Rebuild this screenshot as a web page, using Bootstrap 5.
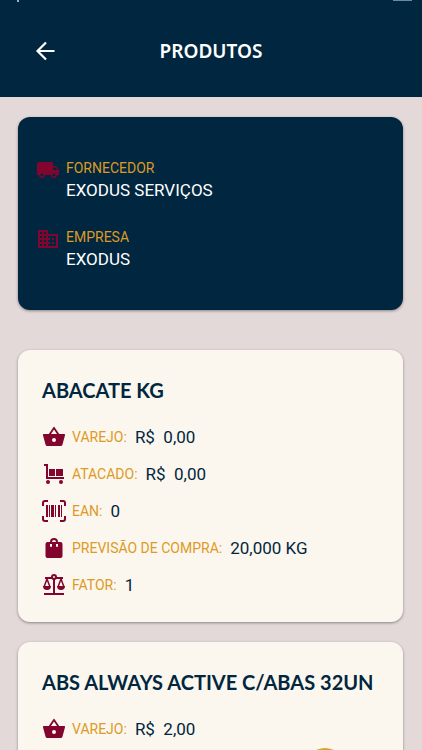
<!DOCTYPE html>
<html lang="pt-BR">
<head>
<meta charset="utf-8">
<meta name="viewport" content="width=device-width, initial-scale=1">
<title>Produtos</title>
<link rel="stylesheet" href="https://cdn.jsdelivr.net/npm/bootstrap@5.3.0/dist/css/bootstrap.min.css">
<style>
:root { --navy: #002640; --wine: #81052f; --gold: #dd9a25; --cream: #fcf7ee; --rose: #e4d9d9; }
body { background: var(--rose); font-family: Roboto, "Liberation Sans", sans-serif; color: var(--navy); }
.app-bar { background: var(--navy); padding: 30px 34px 26px; min-height: 97px; }
.app-bar .side { width: 24px; height: 24px; }
.app-bar h1 { font: 600 19px/24px "Noto Sans", "Open Sans", sans-serif; }
.status-mark { top: 0; left: 17px; width: 2px; height: 2px; background: #9fb0bd; }
.status-battery { top: 0; right: 10px; width: 19px; height: 1px; background: #6f8799; }
.feed { padding: 20px 19px 0 18px; }
.panel { border: 0; border-radius: 12px; box-shadow: 0 1px 3px rgba(0, 0, 0, .4); flex-shrink: 0; }
.summary { background: var(--navy); color: #fff; padding: 40px 18px; margin-bottom: 40px; gap: 25px; }
.summary svg { margin-top: 1px; }
.summary > div, .specs > div { gap: 6px; }
.caption { color: var(--gold); font-size: 14px; line-height: 22px; }
.amount { font-size: 17px; line-height: 22px; white-space: pre; }
.product { background: var(--cream); color: var(--navy); padding: 28px 24px 25px; margin-bottom: 20px; min-height: 272px; }
.product h2 { font: 700 20px/24px Lato, sans-serif; margin-bottom: 23px; white-space: nowrap; }
.specs { gap: 13px; }
.specs dt { font-weight: 400; margin-right: 2px; }
svg { width: 24px; height: 24px; flex: none; display: block; }
.glyph { color: var(--wine); fill: currentColor; }
.fab { width: 40px; height: 40px; right: 77px; bottom: -38px; background: #d5a62c; }
</style>
<script defer src="https://cdn.jsdelivr.net/npm/bootstrap@5.3.0/dist/js/bootstrap.bundle.min.js"></script>
</head>
<body>
<svg class="d-none" aria-hidden="true">
  <symbol id="basket" viewBox="0 0 24 24"><path d="M17.200 9 12.800 2.400a1 1 0 0 0-1.600 0L6.800 9H2a1 1 0 0 0-1 1.300l2.500 9.200A2 2 0 0 0 5.500 21h13a2 2 0 0 0 2-1.500L23 10.300A1 1 0 0 0 22 9ZM9 9l3-4.400L15 9Zm3 8a2 2 0 1 1 0-4 2 2 0 0 1 0 4Z"/></symbol>
</svg>
<div class="vh-100 d-flex flex-column overflow-hidden position-relative">
  <header class="app-bar d-flex align-items-center justify-content-between position-relative">
    <span class="status-mark position-absolute"></span><span class="status-battery position-absolute"></span>
    <button type="button" class="side btn p-0 border-0 text-white" aria-label="Voltar">
      <svg viewBox="0 0 24 24" fill="none" stroke="currentColor" stroke-width="2.200"><path d="M20.500 12H3.500M12 3.500 3.500 12l8.500 8.500"/></svg>
    </button>
    <h1 class="m-0 text-white">PRODUTOS</h1>
    <span class="side"></span>
  </header>
  <main class="feed d-flex flex-column flex-grow-1 overflow-hidden">
    <section class="card panel summary">
      <div class="d-flex">
        <svg class="glyph" viewBox="0 0 24 24"><path d="M20 8h-3V4H3a2 2 0 0 0-2 2v11h2a3 3 0 0 0 6 0h6a3 3 0 0 0 6 0h2v-5ZM6 18.500a1.500 1.500 0 1 1 0-3 1.500 1.500 0 0 1 0 3Zm13.500-9 2 2.500H17V9.500ZM18 18.500a1.500 1.500 0 1 1 0-3 1.500 1.500 0 0 1 0 3Z"/></svg>
        <div><div class="caption">FORNECEDOR</div><div class="amount">EXODUS SERVIÇOS</div></div>
      </div>
      <div class="d-flex">
        <svg class="glyph" viewBox="0 0 24 24"><path d="M12 7V3H2v18h20V7ZM6 19H4v-2h2Zm0-4H4v-2h2Zm0-4H4V9h2Zm0-4H4V5h2Zm4 12H8v-2h2Zm0-4H8v-2h2Zm0-4H8V9h2Zm0-4H8V5h2Zm10 12h-8v-2h2v-2h-2v-2h2v-2h-2V9h8Zm-2-8h-2v2h2Zm0 4h-2v2h2Z"/></svg>
        <div><div class="caption">EMPRESA</div><div class="amount">EXODUS</div></div>
      </div>
    </section>
    <article class="card panel product">
      <h2>ABACATE KG</h2>
      <dl class="specs d-flex flex-column m-0">
        <div class="d-flex align-items-center"><svg class="glyph"><use href="#basket"/></svg><dt class="caption">VAREJO:</dt><dd class="amount m-0">R$  0,00</dd></div>
        <div class="d-flex align-items-center"><svg class="glyph" viewBox="0 0 24 24"><path d="M2 2h4v13h16v2H4V4H2ZM7 7h6v7H7Zm7 0h7v7h-7Z"/><circle cx="6" cy="20" r="2"/><circle cx="19" cy="20" r="2"/></svg><dt class="caption">ATACADO:</dt><dd class="amount m-0">R$  0,00</dd></div>
        <div class="d-flex align-items-center"><svg class="glyph" viewBox="0 0 24 24"><path d="M4 6h2v12H4Zm3 0h1v12H7Zm2 0h3v12H9Zm4 0h1v12h-1Zm3 0h2v12h-2Zm3 0h1v12h-1Z"/><path d="M1 7V4q0-2 2-2h3M18 2h3q2 0 2 2v3M23 17v3q0 2-2 2h-3M6 22H3q-2 0-2-2v-3" fill="none" stroke="currentColor" stroke-width="2"/></svg><dt class="caption">EAN:</dt><dd class="amount m-0">0</dd></div>
        <div class="d-flex align-items-center"><svg class="glyph" viewBox="0 0 24 24"><path d="M18.500 6H16a4 4 0 0 0-8 0H5.500a2 2 0 0 0-2 2v12a2 2 0 0 0 2 2h13a2 2 0 0 0 2-2V8a2 2 0 0 0-2-2ZM10 10a1 1 0 0 1-2 0V8h2Zm0-4a2 2 0 0 1 4 0Zm6 4a1 1 0 0 1-2 0V8h2Z"/></svg><dt class="caption">PREVISÃO DE COMPRA:</dt><dd class="amount m-0">20,000 KG</dd></div>
        <div class="d-flex align-items-center"><svg class="glyph" viewBox="0 0 24 24"><g fill="none" stroke="currentColor" stroke-width="2"><path d="M2 21h20M12 6v15M3 5h7M14 5h7"/><circle cx="12" cy="4" r="2"/><path d="m2 14 3-8 3 8M16 14l3-8 3 8" stroke-width="1.500"/></g><path d="M1 13h8q0 4-4 4t-4-4ZM15 13h8q0 4-4 4t-4-4Z"/></svg><dt class="caption">FATOR:</dt><dd class="amount m-0">1</dd></div>
      </dl>
    </article>
    <article class="card panel product">
      <h2>ABS ALWAYS ACTIVE C/ABAS 32UN</h2>
      <dl class="specs d-flex flex-column m-0">
        <div class="d-flex align-items-center"><svg class="glyph"><use href="#basket"/></svg><dt class="caption">VAREJO:</dt><dd class="amount m-0">R$  2,00</dd></div>
      </dl>
    </article>
  </main>
  <button type="button" class="fab btn rounded-circle position-absolute p-0 border-0" aria-label="Adicionar"></button>
</div>
</body>
</html>
